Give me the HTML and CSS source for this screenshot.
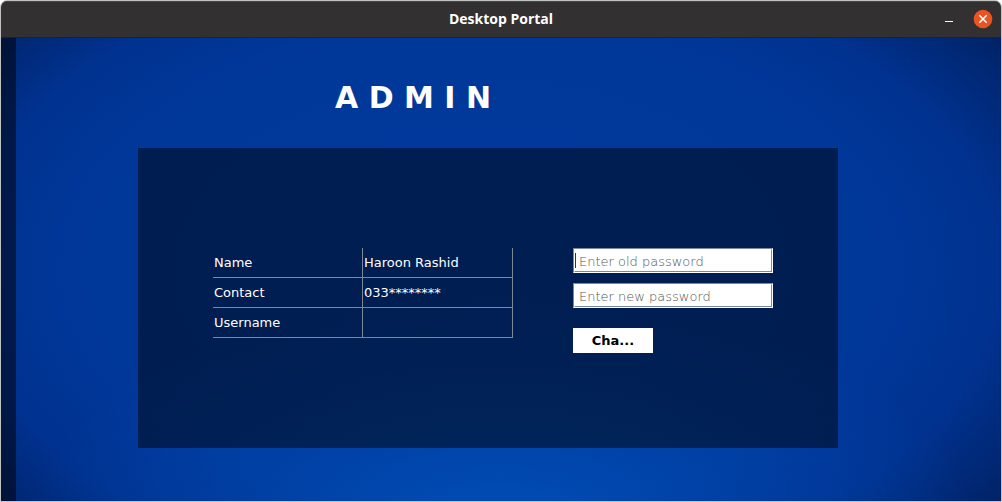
FILE: index.html
```html
<!DOCTYPE html>
<html lang="en">
<head>
<meta charset="utf-8">
<title>Desktop Portal</title>
<link rel="stylesheet" href="styles.css">
</head>
<body>
<div class="window">
  <header class="titlebar">
    <span class="title">Desktop Portal</span>
    <div class="controls">
      <button class="control" type="button" aria-label="Minimize">
        <svg width="20" height="20" viewBox="0 0 20 20" aria-hidden="true"><path d="M6 12.5h8" stroke="#fff"/></svg>
      </button>
      <button class="control" type="button" aria-label="Close">
        <svg width="20" height="20" viewBox="0 0 20 20" aria-hidden="true"><circle cx="10" cy="10" r="9.3" fill="#e95420"/><path d="M6.3 6.3l7.4 7.4M13.7 6.3l-7.4 7.4" stroke="#fff" stroke-width="1.5"/></svg>
      </button>
    </div>
  </header>
  <main class="content">
    <h1 class="heading">A D M I N</h1>
    <section class="panel">
      <table class="details">
        <tbody>
          <tr><th scope="row">Name</th><td>Haroon Rashid</td></tr>
          <tr><th scope="row">Contact</th><td>033********</td></tr>
          <tr><th scope="row">Username</th><td></td></tr>
        </tbody>
      </table>
      <form class="password-form">
        <div class="field focused"><input class="input" type="text" aria-label="Old password" placeholder="Enter old password"></div>
        <div class="field"><input class="input" type="text" aria-label="New password" placeholder="Enter new password"></div>
        <button class="submit" type="button">Cha...</button>
      </form>
    </section>
  </main>
</div>
</body>
</html>
```
FILE: styles.css
```css
* { box-sizing: border-box; }

body {
  margin: 0;
  background: #fff;
  font-family: "DejaVu Sans", sans-serif;
  font-size: 13px;
}

.window {
  display: flex;
  flex-direction: column;
  min-height: 100vh;
  border: 1px solid #c1c3c2;
  border-radius: 7px 7px 0 0;
  overflow: hidden;
}

.titlebar {
  display: grid;
  grid-template-columns: 1fr auto 1fr;
  align-items: center;
  height: 37px;
  padding: 0 8px 1px;
  background: #323030;
  border-top: 1px solid #474747;
  border-bottom: 1px solid #222;
}

.title {
  grid-column: 2;
  color: #fff;
  font: bold 14px/20px "Open Sans", sans-serif;
}

.controls {
  display: flex;
  justify-content: flex-end;
  gap: 14px;
}

.control {
  width: 20px;
  height: 20px;
  padding: 0;
  border: 0;
  background: none;
}

.control svg { display: block; }

.content {
  flex: 1;
  padding: 37px 163px 53px 122px;
  border-left: 15px solid rgba(0, 0, 0, 0.5);
  background:
    radial-gradient(ellipse 48% 50% at 50% 106%, rgba(0, 84, 190, 0.8), rgba(0, 76, 180, 0.45) 50%, transparent),
    radial-gradient(ellipse 68% 88% at 48% 50%, #003a9c 0%, #00389a 58%, #003290 76%, #001f5c 100%);
  background-origin: border-box;
}

.heading {
  margin: 0 0 28px;
  padding-right: 150px;
  color: #fff;
  font-size: 30px;
  line-height: 45px;
  text-align: center;
}

.panel {
  display: grid;
  grid-template-columns: 3fr 2fr;
  align-items: start;
  gap: 60px;
  min-height: 300px;
  padding: 100px 65px 95px 75px;
  background: rgba(0, 0, 0, 0.47);
}

.details {
  width: 100%;
  table-layout: fixed;
  border-collapse: separate;
  border-spacing: 0;
  color: #fff;
}

.details th,
.details td {
  height: 30px;
  padding: 0 1px;
  border-right: 1px solid #7b8995;
  border-bottom: 1px solid #7b8995;
  font-weight: normal;
  text-align: left;
}

.password-form {
  display: flex;
  flex-direction: column;
  align-items: flex-start;
  gap: 10px;
}

.field {
  position: relative;
  width: 100%;
  border: 1px solid;
  border-color: #7a8a99 #fff #fff #7a8a99;
}

.focused::before {
  content: "";
  position: absolute;
  top: 4px;
  left: 1px;
  width: 1px;
  height: 15px;
  background: #333;
}

.input {
  display: block;
  width: 100%;
  height: 23px;
  padding: 2px 4px 0;
  border: 1px solid;
  border-color: #fff #7a8a99 #7a8a99 #fff;
  border-radius: 0;
  outline: 0;
  background: #fff;
  color: #333;
  font: 200 13px "DejaVu Sans", sans-serif;
}

.input::placeholder {
  color: #555;
  opacity: 1;
}

.submit {
  width: 80px;
  height: 25px;
  margin-top: 10px;
  padding: 0;
  border: 0;
  background: #fff;
  color: #000;
  font: bold 13px "DejaVu Sans", sans-serif;
}
```
